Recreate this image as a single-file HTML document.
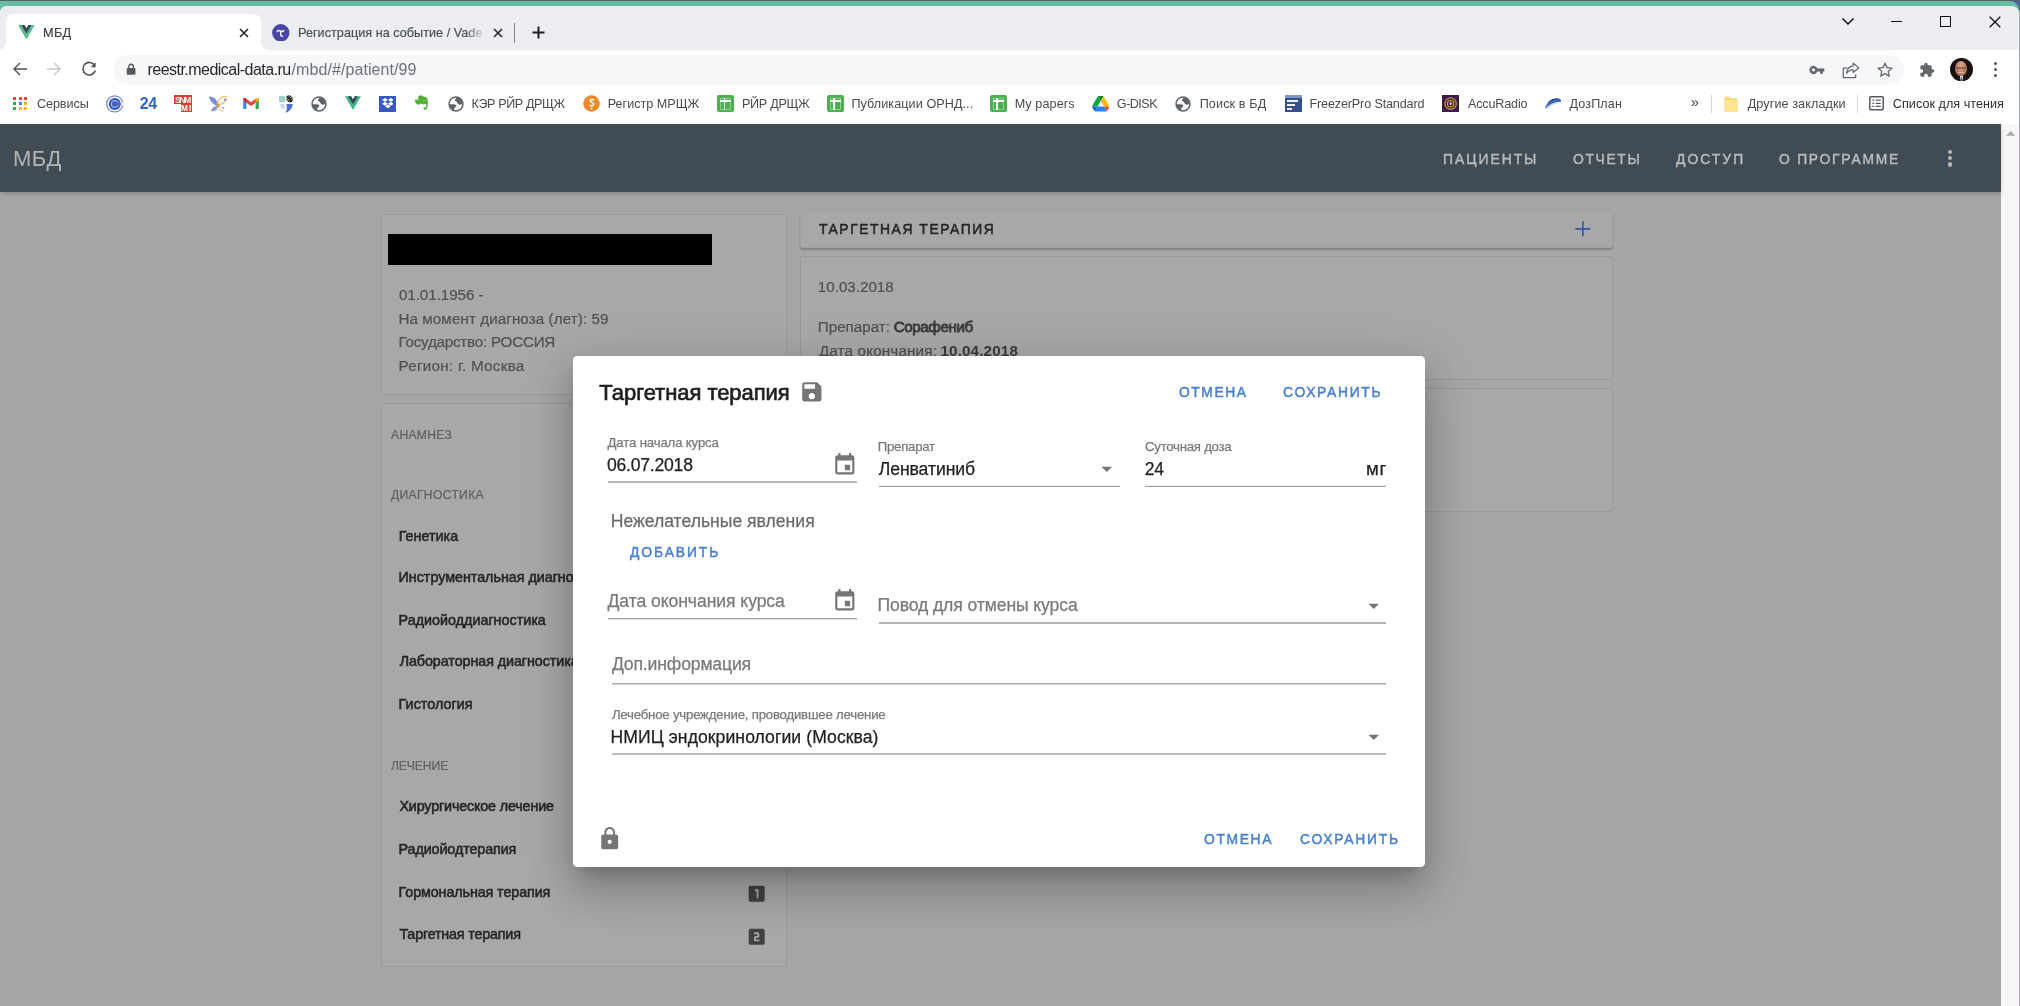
<!DOCTYPE html><html><head><meta charset="utf-8"><title>МБД</title><style>
html,body{margin:0;padding:0}body{width:2020px;height:1006px;position:relative;overflow:hidden;background:#a6a6a6;font-family:"Liberation Sans",sans-serif;}#r{position:absolute;left:0;top:0;width:2020px;height:1006px;overflow:hidden;will-change:transform}#r div,#r svg,#r span{position:absolute;display:block}#r span{white-space:nowrap;}#r span b{font-weight:700;color:inherit}
</style></head><body><div id="r">
<div style="left:0px;top:0px;width:2020px;height:5.7px;background:#66bda5;"></div>
<div style="left:0px;top:0px;width:2020px;height:1.2px;background:#55606b;"></div>
<div style="left:0px;top:5.7px;width:2020px;height:44.3px;background:#ebedf0;"></div>
<div style="left:0;top:1px;width:8px;height:12px;background:#66bfa6"></div>
<div style="left:0;top:5.5px;width:12px;height:12px;background:#ebedf0;border-radius:6px 0 0 0"></div>
<div style="left:2010px;top:1px;width:10px;height:14px;background:#4b64a0"></div>
<div style="left:2004px;top:1px;width:15px;height:14px;background:#66bfa6;border-radius:0 9px 0 0"></div>
<div style="left:2000px;top:5.5px;width:18.6px;height:14px;background:#ebedf0;border-radius:0 7px 0 0"></div>
<div style="left:5.6px;top:14px;width:255.6px;height:37px;background:#fff;border-radius:8px 8px 0 0"></div>
<div style="left:-2.4px;top:42px;width:8px;height:8px;background:radial-gradient(circle at 0 0,#ebedf0 7.6px,#fff 8.2px)"></div>
<div style="left:261.2px;top:42px;width:8px;height:8px;background:radial-gradient(circle at 100% 0,#ebedf0 7.6px,#fff 8.2px)"></div>
<div style="left:0px;top:50px;width:2020px;height:74.2px;background:#fff;"></div>
<div style="left:112.6px;top:55px;width:1791.4px;height:29.6px;background:#f6f7f8;border-radius:15px"></div>
<div style="left:2018.6px;top:10px;width:1.4px;height:996px;background:#a4a9b3;"></div>
<svg style="left:18.1px;top:24.9px;" width="16.8" height="14.5" viewBox="0 0 256 221"><path fill="#5fbc8b" d="M204.8 0H256L128 220.8 0 0h97.92L128 51.2 157.44 0h47.36z"/><path fill="#35495e" d="M50.56 0L128 133.12 204.8 0h-47.36L128 51.2 97.92 0H50.56z"/></svg>
<svg style="left:239px;top:27.6px;" width="10" height="10" viewBox="0 0 10 10"><path d="M1 1L9 9M9 1L1 9" stroke="#202124" stroke-width="1.5" fill="none"/></svg>
<svg style="left:272px;top:23.85px;" width="17.6" height="17.6" viewBox="0 0 17 17"><circle cx="8.5" cy="8.5" r="8.4" fill="#4a46a6"/><path d="M5 7.3c.9-1.2 1.8-1.2 2.8-.5s2 .9 3.6-.4M8.4 6.9v3.6c0 1 .8 1.4 1.9 1.2" stroke="#fff" stroke-width="1.3" fill="none" stroke-linecap="round"/></svg>
<svg style="left:493.4px;top:27.6px;" width="10" height="10" viewBox="0 0 10 10"><path d="M1 1L9 9M9 1L1 9" stroke="#202124" stroke-width="1.5" fill="none"/></svg>
<div style="left:514px;top:22.5px;width:1.1px;height:20.5px;background:#85888d;"></div>
<svg style="left:532px;top:26px;" width="13" height="13" viewBox="0 0 13 13"><path d="M6.5 0.5V12.5M0.5 6.5H12.5" stroke="#202124" stroke-width="2" fill="none"/></svg>
<svg style="left:1841px;top:17px;" width="14" height="9" viewBox="0 0 14 9"><path d="M1.5 1.5L7 7L12.5 1.5" stroke="#111" stroke-width="1.5" fill="none"/></svg>
<div style="left:1890.8px;top:20.6px;width:11.4px;height:1.3px;background:#111;"></div>
<div style="left:1940.2px;top:16.2px;width:10.6px;height:10.4px;background:transparent;border:1.4px solid #111;box-sizing:border-box"></div>
<svg style="left:1988.6px;top:15.6px;" width="12" height="12" viewBox="0 0 12 12"><path d="M0.7 0.7L11.3 11.3M11.3 0.7L0.7 11.3" stroke="#111" stroke-width="1.3" fill="none"/></svg>
<svg style="left:12px;top:61.1px;" width="16" height="16" viewBox="0 0 16 16"><path d="M15 8H2.6M8 2L2 8l6 6" stroke="#4f5358" stroke-width="1.4" fill="none"/></svg>
<svg style="left:46px;top:61.1px;" width="16" height="16" viewBox="0 0 16 16"><path d="M1 8H13.4M8 2l6 6-6 6" stroke="#c6c8cc" stroke-width="1.4" fill="none"/></svg>
<svg style="left:79.7px;top:60.2px;" width="18" height="18" viewBox="0 0 18 18"><path d="M14.6 5.3A6.3 6.3 0 1 0 15.3 10.6" stroke="#4f5358" stroke-width="1.6" fill="none"/><path d="M15.6 2.2v5h-5z" fill="#4f5358"/></svg>
<svg style="left:126px;top:63.3px;" width="10.2" height="12.6" viewBox="0 0 11 13"><rect x="0.8" y="5.2" width="9.4" height="7.2" rx="1.1" fill="#55585d"/><path d="M3 5.6V3.6a2.5 2.5 0 0 1 5 0v2" stroke="#55585d" stroke-width="1.5" fill="none"/></svg>
<svg style="left:1808.8px;top:64.9px;" width="16.2" height="9.9" viewBox="0 0 18 11"><path d="M9.3 3.9H17v3.2h-1.6v2.7h-3.1V7.1H9.3A4.6 4.6 0 1 1 9.3 3.9zM5 7.2a1.8 1.8 0 1 0 0-3.6 1.8 1.8 0 0 0 0 3.6z" fill="#63666b" fill-rule="evenodd"/></svg>
<svg style="left:1842px;top:61.5px;" width="18" height="17" viewBox="0 0 18 17"><path d="M5.2 6.2H1.3V15.6H13.6V12.4" stroke="#63666b" stroke-width="1.3" fill="none"/><path d="M16.8 5.8L11.2 1.2V3.9C7.2 4.4 5 7 4.6 11.2 6.2 8.8 8.2 7.8 11.2 7.8v2.7z" stroke="#63666b" stroke-width="1.2" fill="none" stroke-linejoin="round"/></svg>
<svg style="left:1876.7px;top:61.7px;" width="16" height="15" viewBox="0 0 17 16"><path d="M8.5 1.3l2.15 4.7 5.1.55-3.8 3.45 1.07 5L8.5 12.4 3.98 15l1.07-5-3.8-3.45 5.1-.55z" stroke="#63666b" stroke-width="1.4" fill="none" stroke-linejoin="round"/></svg>
<svg style="left:1919.4px;top:61.6px;" width="16" height="16" viewBox="0 0 24 24"><path fill="#63666b" d="M20.5 11H19V7c0-1.1-.9-2-2-2h-4V3.5C13 2.12 11.88 1 10.5 1S8 2.12 8 3.5V5H4c-1.1 0-1.99.9-1.99 2v3.8H3.5c1.49 0 2.7 1.21 2.7 2.7s-1.21 2.7-2.7 2.7H2V20c0 1.1.9 2 2 2h3.8v-1.5c0-1.49 1.21-2.7 2.7-2.7 1.49 0 2.7 1.21 2.7 2.7V22H17c1.1 0 2-.9 2-2v-4h1.5c1.38 0 2.500-1.120 2.500-2.500S21.880 11 20.500 11z"/></svg>
<div style="left:1949.900px;top:58px;width:23.400px;height:23.400px;border-radius:50%;background:#17100e;overflow:hidden"><div style="left:5.600px;top:3.400px;width:12px;height:15px;border-radius:50% 50% 46% 46%;background:radial-gradient(ellipse at 50% 30%,#d9ab8e 0,#b97f63 55%,#8a5540 100%)"></div><div style="left:6.600px;top:9.400px;width:10px;height:1.300px;background:#4a2f26;opacity:.45"></div><div style="left:8.600px;top:14.200px;width:6px;height:1.200px;border-radius:0 0 3px 3px;background:#ead8cf;opacity:.7"></div><div style="left:2.500px;top:17.800px;width:18.400px;height:12px;border-radius:50% 50% 0 0;background:#191720"></div><div style="left:9.800px;top:18px;width:3.800px;height:8px;background:#e4e4ea;clip-path:polygon(0 0,100% 0,50% 100%)"></div><div style="left:10.900px;top:19.400px;width:1.600px;height:6px;background:#5a3f9c"></div></div>
<div style="left:1993.9px;top:62.1px;width:3px;height:3px;background:#4f5358;border-radius:50%"></div>
<div style="left:1993.9px;top:68.2px;width:3px;height:3px;background:#4f5358;border-radius:50%"></div>
<div style="left:1993.9px;top:74.3px;width:3px;height:3px;background:#4f5358;border-radius:50%"></div>
<div style="left:13.2px;top:96.6px;width:3.2px;height:3.2px;background:#e8453c;"></div>
<div style="left:18.5px;top:96.6px;width:3.2px;height:3.2px;background:#e8453c;"></div>
<div style="left:23.799999999999997px;top:96.6px;width:3.2px;height:3.2px;background:#e8453c;"></div>
<div style="left:13.2px;top:101.89999999999999px;width:3.2px;height:3.2px;background:#34a853;"></div>
<div style="left:18.5px;top:101.89999999999999px;width:3.2px;height:3.2px;background:#4285f4;"></div>
<div style="left:23.799999999999997px;top:101.89999999999999px;width:3.2px;height:3.2px;background:#fbbc05;"></div>
<div style="left:13.2px;top:107.19999999999999px;width:3.2px;height:3.2px;background:#34a853;"></div>
<div style="left:18.5px;top:107.19999999999999px;width:3.2px;height:3.2px;background:#fbbc05;"></div>
<div style="left:23.799999999999997px;top:107.19999999999999px;width:3.2px;height:3.2px;background:#fbbc05;"></div>
<svg style="left:106px;top:95.1px;" width="17.8" height="17.8" viewBox="0 0 17.8 17.8"><circle cx="8.8" cy="8.9" r="8.1" fill="none" stroke="#7386db" stroke-width="1.25"/><rect x="15.6" y="7.4" width="3" height="3" fill="#fff"/><circle cx="8.8" cy="8.9" r="6" fill="#3a4fba"/><path d="M12 6.300L16.200 8.900 12 11.500z" fill="#5a86d8"/><circle cx="8.600" cy="8.900" r="3.300" fill="#4a5fc6" stroke="#7fb6ea" stroke-width="1.300"/><path d="M10.800 6.900L14.600 8.900 10.800 10.900z" fill="#4a5fc6"/></svg>
<div style="left:174.4px;top:95.2px;width:17.3px;height:8.9px;background:#de3b2b;"></div>
<div style="left:180.6px;top:104px;width:11.1px;height:8.2px;background:#de3b2b;"></div>
<svg style="left:207.5px;top:95px;" width="19" height="18" viewBox="0 0 19 18"><path d="M10 11.200C6.500 10.500 2.200 7.500 1 1.600 5.500 1 9.800 4.500 10 11.200z" fill="#7b90d9"/><path d="M9.700 11.400C6.500 10.600 3.600 12.400 3 16.200 7 16.800 9.600 14.800 9.700 11.400z" fill="#8397dd"/><path d="M10.400 10.600c.6-3.400 3.600-7.600 7.400-8 .4 3.400-2.600 7.200-7.400 8z" fill="#eef1fa"/><ellipse cx="14.300" cy="5.400" rx="5.200" ry="2.900" transform="rotate(-38 14.300 5.400)" fill="none" stroke="#f0b050" stroke-width="1"/><path d="M10.600 12.400c.8 2.400 2.800 3.800 4.800 3.400" fill="none" stroke="#f0b050" stroke-width="1"/><circle cx="17" cy="4.800" r="1.200" fill="#8b9de2"/><circle cx="15.300" cy="13" r="1.100" fill="#8b9de2"/><circle cx="13.400" cy="8" r=".8" fill="#c8d0f0"/><circle cx="10" cy="10.800" r="1.500" fill="#e2872b"/></svg>
<svg style="left:243.2px;top:97.9px;" width="16" height="11.6" viewBox="0 0 17.5 13"><path d="M0 1.6V13h3.6V5.300z" fill="#4285f4"/><path d="M17.500 1.600V13h-3.600V5.300z" fill="#34a853"/><path d="M0 1.600C0 .2 1.800-.5 3 .5l5.750 4.300L14.500.5c1.200-1 3-.3 3 1.100l-3.600 3.700L8.750 9 3.600 5.300z" fill="#ea4335"/><path d="M13.900 1v4.300l3.600-3.700C17.500.2 15.700-.5 14.500.5z" fill="#fbbc04"/><path d="M3.600 1v4.300L0 1.600C0 .2 1.800-.5 3 .5z" fill="#c5221f"/></svg>
<svg style="left:277.5px;top:94.5px;" width="16" height="18.5" viewBox="0 0 16 18.500"><rect x="1" y="1" width="6" height="6" fill="#9fd3c9"/><path d="M8.600 5.200L13 .8M9.800 6.800L14.400 2.200M8.400 2.800L10.800.4M11.600 7.400L14.800 4.200" stroke="#1c1c1c" stroke-width="1.300"/><path d="M9.200 1.200l4.800 5.600" stroke="#1c1c1c" stroke-width="1.100"/><path d="M2 9h4.600v5.800C4.200 13.600 2.400 11.600 2 9z" fill="#cfe3f6"/><path d="M3 10l2.600 3M4.400 9.600l1.800 2.200M2.800 11.800l1.800 2" stroke="#a9cbee" stroke-width=".7"/><path d="M8.400 9h6.400c-.4 4.200-3 7.400-7.400 8.800 2-2.400 1.600-5.800 1-8.800z" fill="#4f6fcb"/></svg>
<svg style="left:311.25px;top:95.65px;" width="16" height="16" viewBox="0 0 16 16"><circle cx="8" cy="8" r="6.950" fill="#fff" stroke="#5f6368" stroke-width="1.500"/><path d="M8.800 1.500C7.800 2.900 6.500 3.800 7.100 4.800 7.700 5.700 8.700 5.200 9.100 6.400 9.500 7.600 10.500 8.700 12 8.700 13 8.700 14 8.300 14.500 7.500A6.500 6.500 0 0 0 8.800 1.500Z" fill="#5f6368"/><path d="M1.500 8.200L5.600 8.200C7.200 8.200 8.400 9 8.400 10.200 8.400 11.300 6.700 11.100 6.300 12.100 5.900 13.100 6.400 13.900 7.300 14.500A6.500 6.500 0 0 1 1.500 8.200Z" fill="#5f6368"/></svg>
<svg style="left:345.4px;top:96.3px;" width="16" height="14.4" viewBox="0 0 256 221"><path fill="#41b883" d="M204.800 0H256L128 220.800 0 0h97.920L128 51.200 157.440 0h47.360z"/><path fill="#35495e" d="M50.560 0L128 133.120 204.800 0h-47.360L128 51.200 97.920 0H50.560z"/></svg>
<div style="left:379.1px;top:95.5px;width:16.7px;height:16.8px;background:#3858c4;"></div>
<svg style="left:381.6px;top:98.2px;" width="11.8" height="11" viewBox="0 0 13 12"><path d="M3.300 0L0 2.100l3.300 2.100 3.200-2.100zM9.700 0L6.500 2.100l3.200 2.100L13 2.100zM0 6.300l3.300 2.100 3.200-2.100-3.200-2.100zM9.700 4.200L6.500 6.300l3.200 2.100L13 6.300zM3.300 9.100l3.200 2.100 3.200-2.100-3.200-2.100z" fill="#fff"/></svg>
<svg style="left:413.6px;top:95px;" width="15.2" height="17.4" viewBox="0 0 16 19"><path d="M4.600 1.200C6.500.2 9.500.6 10.500 2c2.600.2 3.900 1 4.200 3.400.4 3.200 0 7-1 9.600-.5 1.300-2.600 1.400-3.400.6-.6-.6-.3-2 .7-2.100.7 0 .9.500 1.500.300.5-1.500.6-3.200.3-4.300-1.600 1.300-4.300 1.100-5.500-.4-.6 1-1.700 1.600-3.100 1.400C1.800 10.200.7 8 1 5.400zM4.400 1.400L1.200 5h3.200z" fill="#4fb239"/><circle cx="10.600" cy="6.300" r=".7" fill="#cfe8c8"/><path d="M2.200 5.200c1 .3 2 .1 2.600-.6" stroke="#cfe8c8" stroke-width=".6" fill="none"/></svg>
<svg style="left:447.6px;top:95.65px;" width="16" height="16" viewBox="0 0 16 16"><circle cx="8" cy="8" r="6.950" fill="#fff" stroke="#5f6368" stroke-width="1.500"/><path d="M8.800 1.500C7.800 2.900 6.500 3.800 7.100 4.800 7.700 5.700 8.700 5.200 9.100 6.400 9.500 7.600 10.500 8.700 12 8.700 13 8.700 14 8.300 14.500 7.500A6.500 6.500 0 0 0 8.800 1.500Z" fill="#5f6368"/><path d="M1.500 8.200L5.600 8.200C7.200 8.200 8.400 9 8.400 10.200 8.400 11.300 6.700 11.100 6.300 12.100 5.900 13.100 6.400 13.900 7.300 14.500A6.500 6.500 0 0 1 1.500 8.200Z" fill="#5f6368"/></svg>
<svg style="left:582.5px;top:95.2px;" width="17" height="17" viewBox="0 0 17 17"><circle cx="8.500" cy="8.500" r="8.300" fill="#ee8a2c"/><path d="M11 5.200c-1-.900-3.600-1-3.900.5-.3 1.700 3.700 1.600 3.500 3.700-.2 1.500-2.600 1.700-3.900.700" stroke="#fff" stroke-width="1.500" fill="none"/><circle cx="8.500" cy="13.400" r="1" fill="#fff"/></svg>
<div style="left:717px;top:95.2px;width:17.2px;height:17.2px;background:#4caf50;border-radius:2px"></div>
<div style="left:720px;top:100px;width:11.2px;height:1.6px;background:#fff;"></div>
<div style="left:723.6px;top:98px;width:1.6px;height:12px;background:#fff;"></div>
<div style="left:720px;top:98px;width:11.2px;height:12px;background:transparent;border:1px solid #dff0df;box-sizing:border-box;opacity:.45"></div>
<div style="left:826.7px;top:95.2px;width:17.2px;height:17.2px;background:#4caf50;border-radius:2px"></div>
<div style="left:829.7px;top:100px;width:11.2px;height:1.6px;background:#fff;"></div>
<div style="left:833.3000000000001px;top:98px;width:1.6px;height:12px;background:#fff;"></div>
<div style="left:829.7px;top:98px;width:11.2px;height:12px;background:transparent;border:1px solid #dff0df;box-sizing:border-box;opacity:.45"></div>
<div style="left:989.5px;top:95.2px;width:17.2px;height:17.2px;background:#4caf50;border-radius:2px"></div>
<div style="left:992.5px;top:100px;width:11.2px;height:1.6px;background:#fff;"></div>
<div style="left:996.1px;top:98px;width:1.6px;height:12px;background:#fff;"></div>
<div style="left:992.5px;top:98px;width:11.2px;height:12px;background:transparent;border:1px solid #dff0df;box-sizing:border-box;opacity:.45"></div>
<svg style="left:1091.5px;top:96.4px;" width="17.5" height="15.5" viewBox="0 0 87.300 78"><path d="m6.600 66.850 3.850 6.650c.800 1.400 1.950 2.500 3.300 3.300l13.750-23.800h-27.500c0 1.550.400 3.100 1.200 4.500z" fill="#0066da"/><path d="m43.650 25-13.750-23.800c-1.350.800-2.500 1.900-3.300 3.300l-25.400 44a9.060 9.060 0 0 0 -1.200 4.500h27.500z" fill="#00ac47"/><path d="m73.550 76.800c1.350-.800 2.500-1.900 3.300-3.300l1.600-2.750 7.650-13.250c.800-1.400 1.200-2.950 1.200-4.500h-27.502l5.852 11.500z" fill="#ea4335"/><path d="m43.650 25 13.750-23.800c-1.350-.800-2.900-1.200-4.500-1.200h-18.500c-1.600 0-3.150.450-4.500 1.200z" fill="#00832d"/><path d="m59.800 53h-32.300l-13.750 23.800c1.350.800 2.900 1.200 4.500 1.200h50.800c1.600 0 3.150-.450 4.500-1.200z" fill="#2684fc"/><path d="m73.400 26.500-12.700-22c-.800-1.400-1.950-2.500-3.300-3.300l-13.750 23.800 16.150 28h27.450c0-1.550-.400-3.100-1.200-4.500z" fill="#ffba00"/></svg>
<svg style="left:1175px;top:95.65px;" width="16" height="16" viewBox="0 0 16 16"><circle cx="8" cy="8" r="6.950" fill="#fff" stroke="#5f6368" stroke-width="1.500"/><path d="M8.800 1.500C7.800 2.900 6.500 3.800 7.100 4.800 7.700 5.700 8.700 5.200 9.100 6.400 9.500 7.600 10.500 8.700 12 8.700 13 8.700 14 8.300 14.500 7.500A6.500 6.500 0 0 0 8.800 1.500Z" fill="#5f6368"/><path d="M1.500 8.200L5.600 8.200C7.200 8.200 8.400 9 8.400 10.200 8.400 11.300 6.700 11.100 6.300 12.100 5.900 13.100 6.400 13.900 7.300 14.500A6.500 6.500 0 0 1 1.500 8.200Z" fill="#5f6368"/></svg>
<div style="left:1284.5px;top:95.2px;width:17.2px;height:17.2px;background:#36508f;"></div>
<div style="left:1284.5px;top:95.2px;width:17.2px;height:3.2px;background:#7f96c8;"></div>
<div style="left:1287px;top:100.2px;width:11px;height:2px;background:#f1f4fa;"></div>
<div style="left:1287px;top:104px;width:8px;height:2px;background:#f1f4fa;"></div>
<div style="left:1287px;top:107.8px;width:5px;height:2px;background:#f1f4fa;"></div>
<div style="left:1441.7px;top:95.2px;width:17.3px;height:17.3px;background:#3a1d4d;"></div>
<svg style="left:1441.7px;top:95.2px;" width="17.3" height="17.3" viewBox="0 0 17 17"><circle cx="8.500" cy="8.500" r="5.600" fill="none" stroke="#c9962c" stroke-width="1.200"/><circle cx="8.500" cy="8.500" r="3.200" fill="none" stroke="#d7a93a" stroke-width="1"/><circle cx="8.500" cy="8.500" r="1.300" fill="#e7c163"/></svg>
<svg style="left:1543.5px;top:97px;" width="18" height="13" viewBox="0 0 18 13"><path d="M1 11.500C2.500 5 8 1 14.500 1.500c2.500.3 3.300 2.200 2 3.600C12 4.200 6 6.500 1 11.500z" fill="#3b66c4"/><path d="M1 11.500c3-3.500 8-6 13.500-5.500-3 .2-8.500 2-10.500 5.500z" fill="#a9c0ea"/><path d="M3 6.500C6 2.500 11 .8 15 1.700 10.500 1.900 6 3.800 3 6.500z" fill="#15264f"/></svg>
<div style="left:1711px;top:95px;width:1px;height:18px;background:#d5d7db;"></div>
<svg style="left:1723.5px;top:95.6px;" width="14" height="17" viewBox="0 0 14 17"><path d="M.5 1.500Q.5.5 1.500.5H5l1.300 1.800h6.200q1 0 1 1V15q0 1-1 1H1.500q-1 0-1-1z" fill="#f8dc7a"/><path d="M.5 4.200h13V15q0 1-1 1H1.500q-1 0-1-1z" fill="#fbe591"/></svg>
<div style="left:1857px;top:95px;width:1px;height:18px;background:#d5d7db;"></div>
<svg style="left:1869px;top:96.4px;" width="15" height="14.6" viewBox="0 0 15 14.600"><rect x=".8" y=".8" width="13.400" height="13" rx="1" fill="none" stroke="#55585d" stroke-width="1.500"/><path d="M3.400 4.200h1.800M3.400 7.300h1.800M3.400 10.400h1.800M6.700 4.200h5M6.700 7.300h5M6.700 10.400h5" stroke="#55585d" stroke-width="1.300"/></svg>
<div style="left:0px;top:124.2px;width:2001px;height:882px;background:#a6a6a6;"></div>
<div style="left:2001px;top:124.2px;width:17.6px;height:882px;background:#f6f6f6;"></div>
<svg style="left:2005.5px;top:131.4px;" width="9.4" height="4.8" viewBox="0 0 9.400 4.800"><path d="M0 4.800L4.700 0l4.700 4.800z" fill="#aaa"/></svg>
<div style="left:0px;top:124.2px;width:2001px;height:68px;background:#414b53;box-shadow:0 2px 4px rgba(0,0,0,.18)"></div>
<div style="left:1947.6px;top:149.60000000000002px;width:4.4px;height:4.4px;background:#b8b8b8;border-radius:50%"></div>
<div style="left:1947.6px;top:156.0px;width:4.4px;height:4.4px;background:#b8b8b8;border-radius:50%"></div>
<div style="left:1947.6px;top:162.4px;width:4.4px;height:4.4px;background:#b8b8b8;border-radius:50%"></div>
<div style="left:381px;top:213.8px;width:406.1px;height:181px;background:#a8a8a8;border:1px solid #9a9a9a;box-sizing:border-box;border-radius:2.5px"></div>
<div style="left:387.5px;top:234px;width:324.5px;height:30.5px;background:#000;"></div>
<div style="left:381px;top:403.4px;width:406.1px;height:563.8px;background:#a8a8a8;border:1px solid #9a9a9a;box-sizing:border-box;border-radius:2.5px"></div>
<svg style="left:746.033px;top:883.0px;" width="21.34" height="21.6" viewBox="0 0 24 24"><path fill="#414141" fill-rule="evenodd" d="M14,17H12V9H10V7H14M19,3H5A2,2 0 0,0 3,5V19A2,2 0 0,0 5,21H19A2,2 0 0,0 21,19V5A2,2 0 0,0 19,3Z"/></svg>
<svg style="left:746.033px;top:925.6999999999999px;" width="21.34" height="21.6" viewBox="0 0 24 24"><path fill="#414141" fill-rule="evenodd" d="M15,11C15,12.11 14.1,13 13,13H11V15H15V17H9V13C9,11.89 9.9,11 11,11H13V9H9V7H13A2,2 0 0,1 15,9M19,3H5A2,2 0 0,0 3,5V19A2,2 0 0,0 5,21H19A2,2 0 0,0 21,19V5A2,2 0 0,0 19,3Z"/></svg>
<div style="left:799.6px;top:210.5px;width:813.2px;height:37.2px;background:#a8a8a8;border:1px solid #9a9a9a;box-sizing:border-box;border-radius:2.5px;box-shadow:0 2px 2px rgba(0,0,0,.22);border-color:#a2a2a2"></div>
<svg style="left:1569.7px;top:215.5px;" width="25.7" height="25.7" viewBox="0 0 24 24"><path fill="#3552aa" d="M19 12.750h-6.250V19h-1.500v-6.250H5v-1.500h6.250V5h1.500v6.250H19v1.500z"/></svg>
<div style="left:799.6px;top:255.9px;width:813.2px;height:123.8px;background:#a8a8a8;border:1px solid #9a9a9a;box-sizing:border-box;border-radius:2.5px"></div>
<div style="left:799.6px;top:388.2px;width:813.2px;height:124.1px;background:#a8a8a8;border:1px solid #9a9a9a;box-sizing:border-box;border-radius:2.5px"></div>
<span style="left:43.12px;top:24.10px;height:18px;line-height:18px;font-size:12.8px;color:#3b3e42;letter-spacing:0.152px;-webkit-text-stroke:0.15px #3b3e42;">МБД</span>
<span style="left:298.04px;top:24.09px;height:18px;line-height:18px;font-size:12.6px;color:#484b50;letter-spacing:0.046px;-webkit-text-stroke:0.15px #484b50;width:185px;overflow:hidden;">Регистрация на событие / Vader</span>
<span style="left:147.44px;top:59.29px;height:22px;line-height:22px;font-size:16px;color:#25272a;letter-spacing:-0.519px;">reestr.medical-data.ru</span>
<span style="left:291.60px;top:59.29px;height:22px;line-height:22px;font-size:16px;color:#6e7176;letter-spacing:0.076px;">/mbd/#/patient/99</span>
<span style="left:36.96px;top:95.19px;height:18px;line-height:18px;font-size:12.6px;color:#484b50;letter-spacing:-0.062px;">Сервисы</span>
<span style="left:139.85px;top:93.04px;height:22px;line-height:22px;font-size:16px;color:#2f66c0;font-weight:700;letter-spacing:-0.556px;">24</span>
<span style="left:174.95px;top:93.84px;height:12px;line-height:12px;font-size:8.8px;color:#fff;font-weight:700;letter-spacing:-1.560px;">SNM</span>
<span style="left:181.04px;top:102.09px;height:12px;line-height:12px;font-size:8.4px;color:#fff;font-weight:700;letter-spacing:1.011px;">MI</span>
<span style="left:471.47px;top:95.19px;height:18px;line-height:18px;font-size:12.6px;color:#484b50;letter-spacing:-0.392px;">КЭР РЙР ДРЩЖ</span>
<span style="left:607.67px;top:95.19px;height:18px;line-height:18px;font-size:12.6px;color:#484b50;letter-spacing:0.012px;">Регистр МРЩЖ</span>
<span style="left:741.97px;top:95.19px;height:18px;line-height:18px;font-size:12.6px;color:#484b50;letter-spacing:-0.288px;">РЙР ДРЩЖ</span>
<span style="left:851.48px;top:95.19px;height:18px;line-height:18px;font-size:12.6px;color:#484b50;letter-spacing:0.074px;">Публикации ОРНД...</span>
<span style="left:1014.67px;top:95.19px;height:18px;line-height:18px;font-size:12.6px;color:#484b50;letter-spacing:0.124px;">My papers</span>
<span style="left:1116.87px;top:95.19px;height:18px;line-height:18px;font-size:12.6px;color:#484b50;letter-spacing:-0.523px;">G-DISK</span>
<span style="left:1199.68px;top:95.19px;height:18px;line-height:18px;font-size:12.6px;color:#484b50;letter-spacing:0.129px;">Поиск в БД</span>
<span style="left:1309.47px;top:95.19px;height:18px;line-height:18px;font-size:12.6px;color:#484b50;letter-spacing:-0.142px;">FreezerPro Standard</span>
<span style="left:1467.98px;top:95.19px;height:18px;line-height:18px;font-size:12.6px;color:#484b50;letter-spacing:-0.169px;">AccuRadio</span>
<span style="left:1569.51px;top:95.19px;height:18px;line-height:18px;font-size:12.6px;color:#484b50;letter-spacing:0.116px;">ДозПлан</span>
<span style="left:1690.93px;top:92.19px;height:20px;line-height:20px;font-size:14px;color:#3a3d41;letter-spacing:0.838px;">»</span>
<span style="left:1747.71px;top:95.19px;height:18px;line-height:18px;font-size:12.6px;color:#484b50;letter-spacing:0.098px;">Другие закладки</span>
<span style="left:1892.86px;top:95.19px;height:18px;line-height:18px;font-size:12.6px;color:#2d2f33;letter-spacing:0.037px;">Список для чтения</span>
<span style="left:13.10px;top:142.82px;height:31px;line-height:31px;font-size:22px;color:#b4b4b4;letter-spacing:0.321px;">МБД</span>
<span style="left:1442.98px;top:147.69px;height:22px;line-height:22px;font-size:15.4px;color:#bcbcbc;letter-spacing:2.220px;-webkit-text-stroke:0.45px #bcbcbc;transform:scaleX(0.9);transform-origin:0 50%;">ПАЦИЕНТЫ</span>
<span style="left:1572.55px;top:147.69px;height:22px;line-height:22px;font-size:15.4px;color:#bcbcbc;letter-spacing:1.835px;-webkit-text-stroke:0.45px #bcbcbc;transform:scaleX(0.9);transform-origin:0 50%;">ОТЧЕТЫ</span>
<span style="left:1675.70px;top:147.69px;height:22px;line-height:22px;font-size:15.4px;color:#bcbcbc;letter-spacing:2.282px;-webkit-text-stroke:0.45px #bcbcbc;transform:scaleX(0.9);transform-origin:0 50%;">ДОСТУП</span>
<span style="left:1778.65px;top:147.69px;height:22px;line-height:22px;font-size:15.4px;color:#bcbcbc;letter-spacing:1.954px;-webkit-text-stroke:0.45px #bcbcbc;transform:scaleX(0.9);transform-origin:0 50%;">О ПРОГРАММЕ</span>
<span style="left:398.91px;top:284.01px;height:21px;line-height:21px;font-size:15.2px;color:#505050;letter-spacing:-0.057px;-webkit-text-stroke:0.2px #505050;">01.01.1956 -</span>
<span style="left:398.45px;top:307.76px;height:21px;line-height:21px;font-size:15.2px;color:#505050;letter-spacing:0.083px;-webkit-text-stroke:0.2px #505050;">На момент диагноза (лет): 59</span>
<span style="left:398.45px;top:331.06px;height:21px;line-height:21px;font-size:15.2px;color:#505050;letter-spacing:-0.221px;-webkit-text-stroke:0.2px #505050;">Государство: РОССИЯ</span>
<span style="left:398.45px;top:354.51px;height:21px;line-height:21px;font-size:15.2px;color:#505050;letter-spacing:0.291px;-webkit-text-stroke:0.2px #505050;">Регион: г. Москва</span>
<span style="left:391.07px;top:425.85px;height:18px;line-height:18px;font-size:13.2px;color:#5e5e5e;letter-spacing:0.318px;-webkit-text-stroke:0.2px #5e5e5e;transform:scaleX(0.92);transform-origin:0 50%;">АНАМНЕЗ</span>
<span style="left:391.00px;top:485.50px;height:18px;line-height:18px;font-size:13.2px;color:#5e5e5e;letter-spacing:0.345px;-webkit-text-stroke:0.2px #5e5e5e;transform:scaleX(0.92);transform-origin:0 50%;">ДИАГНОСТИКА</span>
<span style="left:398.70px;top:526.49px;height:20px;line-height:20px;font-size:14.3px;color:#262626;letter-spacing:0.036px;-webkit-text-stroke:0.55px #262626;">Генетика</span>
<span style="left:398.60px;top:567.19px;height:20px;line-height:20px;font-size:14.3px;color:#262626;letter-spacing:-0.013px;-webkit-text-stroke:0.55px #262626;">Инструментальная диагностика</span>
<span style="left:398.60px;top:609.99px;height:20px;line-height:20px;font-size:14.3px;color:#262626;letter-spacing:0.023px;-webkit-text-stroke:0.55px #262626;">Радиойоддиагностика</span>
<span style="left:399.65px;top:651.30px;height:20px;line-height:20px;font-size:14.3px;color:#262626;letter-spacing:-0.061px;-webkit-text-stroke:0.55px #262626;">Лабораторная диагностика</span>
<span style="left:398.60px;top:693.58px;height:20px;line-height:20px;font-size:14.3px;color:#262626;letter-spacing:0.057px;-webkit-text-stroke:0.55px #262626;">Гистология</span>
<span style="left:391.19px;top:757.30px;height:18px;line-height:18px;font-size:13.2px;color:#5e5e5e;letter-spacing:-0.104px;-webkit-text-stroke:0.2px #5e5e5e;transform:scaleX(0.92);transform-origin:0 50%;">ЛЕЧЕНИЕ</span>
<span style="left:399.45px;top:796.49px;height:20px;line-height:20px;font-size:14.3px;color:#262626;letter-spacing:-0.142px;-webkit-text-stroke:0.55px #262626;">Хирургическое лечение</span>
<span style="left:398.60px;top:838.99px;height:20px;line-height:20px;font-size:14.3px;color:#262626;letter-spacing:-0.090px;-webkit-text-stroke:0.55px #262626;">Радиойодтерапия</span>
<span style="left:398.60px;top:881.80px;height:20px;line-height:20px;font-size:14.3px;color:#262626;letter-spacing:-0.088px;-webkit-text-stroke:0.55px #262626;">Гормональная терапия</span>
<span style="left:399.45px;top:924.19px;height:20px;line-height:20px;font-size:14.3px;color:#262626;letter-spacing:-0.171px;-webkit-text-stroke:0.55px #262626;">Таргетная терапия</span>
<span style="left:818.74px;top:217.78px;height:22px;line-height:22px;font-size:15.4px;color:#262626;letter-spacing:1.733px;-webkit-text-stroke:0.55px #262626;transform:scaleX(0.9);transform-origin:0 50%;">ТАРГЕТНАЯ ТЕРАПИЯ</span>
<span style="left:817.84px;top:275.51px;height:21px;line-height:21px;font-size:15.2px;color:#505050;letter-spacing:-0.011px;-webkit-text-stroke:0.2px #505050;">10.03.2018</span>
<span style="left:817.77px;top:316.01px;height:21px;line-height:21px;font-size:15.2px;color:#505050;-webkit-text-stroke:0.2px #505050;">Препарат:</span>
<span style="left:893.63px;top:316.01px;height:21px;line-height:21px;font-size:15.2px;color:#3a3a3a;letter-spacing:-0.402px;-webkit-text-stroke:0.8px #3a3a3a;">Сорафениб</span>
<span style="left:818.89px;top:339.62px;height:21px;line-height:21px;font-size:15.2px;color:#505050;letter-spacing:0.170px;-webkit-text-stroke:0.2px #505050;">Дата окончания:</span>
<span style="left:940.44px;top:339.62px;height:21px;line-height:21px;font-size:15.2px;color:#3a3a3a;font-weight:700;letter-spacing:0.157px;">10.04.2018</span>
<div style="left:466px;top:22px;width:20px;height:22px;background:linear-gradient(90deg,rgba(235,237,240,0),#ebedf0)"></div>
<div style="left:573.3px;top:356px;width:851.4px;height:510.5px;background:#fff;border-radius:4.500px;box-shadow:0 12px 16px -7px rgba(0,0,0,.2),0 26px 42px 3px rgba(0,0,0,.14),0 10px 50px 8px rgba(0,0,0,.12)"></div>
<span style="left:599.36px;top:376.53px;height:31px;line-height:31px;font-size:22px;color:#1f1f1f;letter-spacing:-0.043px;-webkit-text-stroke:0.7px #1f1f1f;">Таргетная терапия</span>
<span style="left:1178.87px;top:381.38px;height:22px;line-height:22px;font-size:15.4px;color:#4a80d2;letter-spacing:1.705px;-webkit-text-stroke:0.5px #4a80d2;transform:scaleX(0.9);transform-origin:0 50%;">ОТМЕНА</span>
<span style="left:1283.42px;top:381.38px;height:22px;line-height:22px;font-size:15.4px;color:#4a80d2;letter-spacing:1.864px;-webkit-text-stroke:0.5px #4a80d2;transform:scaleX(0.9);transform-origin:0 50%;">СОХРАНИТЬ</span>
<span style="left:607.53px;top:434.10px;height:18px;line-height:18px;font-size:13.2px;color:#7a7a7a;letter-spacing:-0.148px;-webkit-text-stroke:0.25px #7a7a7a;">Дата начала курса</span>
<span style="left:606.94px;top:452.61px;height:25px;line-height:25px;font-size:17.6px;color:#222222;letter-spacing:-0.229px;-webkit-text-stroke:0.25px #222222;">06.07.2018</span>
<span style="left:877.81px;top:438.41px;height:18px;line-height:18px;font-size:13.2px;color:#7a7a7a;letter-spacing:-0.243px;-webkit-text-stroke:0.25px #7a7a7a;">Препарат</span>
<span style="left:878.72px;top:456.72px;height:25px;line-height:25px;font-size:17.6px;color:#222222;letter-spacing:-0.080px;-webkit-text-stroke:0.25px #222222;">Ленватиниб</span>
<span style="left:1145.00px;top:438.41px;height:18px;line-height:18px;font-size:13.2px;color:#7a7a7a;letter-spacing:-0.245px;-webkit-text-stroke:0.25px #7a7a7a;">Суточная доза</span>
<span style="left:1144.74px;top:456.81px;height:25px;line-height:25px;font-size:17.6px;color:#222222;letter-spacing:-0.327px;-webkit-text-stroke:0.25px #222222;">24</span>
<span style="left:1366.14px;top:456.81px;height:25px;line-height:25px;font-size:17.6px;color:#222222;letter-spacing:0.612px;-webkit-text-stroke:0.25px #222222;transform:scaleX(1.06);transform-origin:0 50%;">мг</span>
<span style="left:610.68px;top:508.72px;height:25px;line-height:25px;font-size:17.6px;color:#6b6b6b;letter-spacing:-0.002px;-webkit-text-stroke:0.25px #6b6b6b;">Нежелательные явления</span>
<span style="left:630.02px;top:541.28px;height:22px;line-height:22px;font-size:15.4px;color:#4a80d2;letter-spacing:2.116px;-webkit-text-stroke:0.5px #4a80d2;transform:scaleX(0.9);transform-origin:0 50%;">ДОБАВИТЬ</span>
<span style="left:607.50px;top:588.67px;height:25px;line-height:25px;font-size:17.6px;color:#7a7a7a;letter-spacing:-0.075px;-webkit-text-stroke:0.25px #7a7a7a;">Дата окончания курса</span>
<span style="left:877.45px;top:593.42px;height:25px;line-height:25px;font-size:17.6px;color:#7a7a7a;letter-spacing:-0.105px;-webkit-text-stroke:0.25px #7a7a7a;">Повод для отмены курса</span>
<span style="left:611.90px;top:652.06px;height:25px;line-height:25px;font-size:17.6px;color:#7a7a7a;letter-spacing:-0.155px;-webkit-text-stroke:0.25px #7a7a7a;">Доп.информация</span>
<span style="left:611.91px;top:706.30px;height:18px;line-height:18px;font-size:13.2px;color:#7a7a7a;letter-spacing:-0.196px;-webkit-text-stroke:0.25px #7a7a7a;">Лечебное учреждение, проводившее лечение</span>
<span style="left:610.58px;top:724.76px;height:25px;line-height:25px;font-size:17.6px;color:#222222;letter-spacing:0.067px;-webkit-text-stroke:0.25px #222222;">НМИЦ эндокринологии (Москва)</span>
<span style="left:1204.42px;top:828.44px;height:22px;line-height:22px;font-size:15.4px;color:#4a80d2;letter-spacing:1.805px;-webkit-text-stroke:0.5px #4a80d2;transform:scaleX(0.9);transform-origin:0 50%;">ОТМЕНА</span>
<span style="left:1300.22px;top:828.44px;height:22px;line-height:22px;font-size:15.4px;color:#4a80d2;letter-spacing:1.920px;-webkit-text-stroke:0.5px #4a80d2;transform:scaleX(0.9);transform-origin:0 50%;">СОХРАНИТЬ</span>
<svg style="left:798.65px;top:379.2px;" width="25.7" height="25.7" viewBox="0 0 24 24"><path fill="#757575" d="M17 3H5c-1.110 0-2 .9-2 2v14c0 1.100.890 2 2 2h14c1.100 0 2-.9 2-2V7l-4-4zm-5 16c-1.660 0-3-1.340-3-3s1.340-3 3-3 3 1.340 3 3-1.340 3-3 3zm3-10H5V5h10v4z"/></svg>
<div style="left:607.5px;top:481px;width:249px;height:2px;background:linear-gradient(#b6b6b6 50%,#b6b6b6 50%);"></div>
<svg style="left:831.7px;top:452.2px;" width="25.6" height="25.6" viewBox="0 0 24 24"><path fill="#757575" d="M17 12h-5v5h5v-5zM16 1v2H8V1H6v2H5c-1.110 0-1.990.9-1.990 2L3 19c0 1.100.890 2 2 2h14c1.100 0 2-.9 2-2V5c0-1.100-.9-2-2-2h-1V1h-2zm3 18H5V8h14v11z"/></svg>
<div style="left:878.5px;top:485px;width:241.5px;height:2px;background:linear-gradient(#ececec 50%,#a1a1a1 50%);"></div>
<svg style="left:1093.95px;top:456.11875px;" width="25.5" height="25.5" viewBox="0 0 24 24"><path fill="#757575" d="M7 10l5 5 5-5z"/></svg>
<div style="left:1145.3px;top:485px;width:240.9px;height:2px;background:linear-gradient(#ececec 50%,#a1a1a1 50%);"></div>
<svg style="left:831.7px;top:588.1px;" width="25.6" height="25.6" viewBox="0 0 24 24"><path fill="#757575" d="M17 12h-5v5h5v-5zM16 1v2H8V1H6v2H5c-1.110 0-1.990.9-1.990 2L3 19c0 1.100.890 2 2 2h14c1.100 0 2-.9 2-2V5c0-1.100-.9-2-2-2h-1V1h-2zm3 18H5V8h14v11z"/></svg>
<div style="left:607.5px;top:618px;width:249px;height:2px;background:linear-gradient(#a5a5a5 50%,#dcdcdc 50%);"></div>
<div style="left:878.5px;top:622px;width:507.7px;height:2px;background:linear-gradient(#b1b1b1 50%,#b1b1b1 50%);"></div>
<svg style="left:1360.65px;top:592.91875px;" width="25.5" height="25.5" viewBox="0 0 24 24"><path fill="#757575" d="M7 10l5 5 5-5z"/></svg>
<div style="left:611.5px;top:683px;width:774.7px;height:2px;background:linear-gradient(#a7a7a7 50%,#d8d8d8 50%);"></div>
<div style="left:611.5px;top:753px;width:774.7px;height:2px;background:linear-gradient(#bcbcbc 50%,#bcbcbc 50%);"></div>
<svg style="left:1360.65px;top:723.61875px;" width="25.5" height="25.5" viewBox="0 0 24 24"><path fill="#757575" d="M7 10l5 5 5-5z"/></svg>
<svg style="left:596.67px;top:826.14px;" width="25.4" height="25.4" viewBox="0 0 24 24"><path fill="#757575" d="M18 8h-1V6c0-2.760-2.240-5-5-5S7 3.240 7 6v2H6c-1.100 0-2 .9-2 2v10c0 1.100.9 2 2 2h12c1.100 0 2-.9 2-2V10c0-1.100-.9-2-2-2zm-6 9c-1.100 0-2-.9-2-2s.9-2 2-2 2 .9 2 2-.9 2-2 2zm3.100-9H8.900V6c0-1.710 1.390-3.100 3.100-3.100 1.710 0 3.100 1.390 3.100 3.100v2z"/></svg>
</div></body></html>
